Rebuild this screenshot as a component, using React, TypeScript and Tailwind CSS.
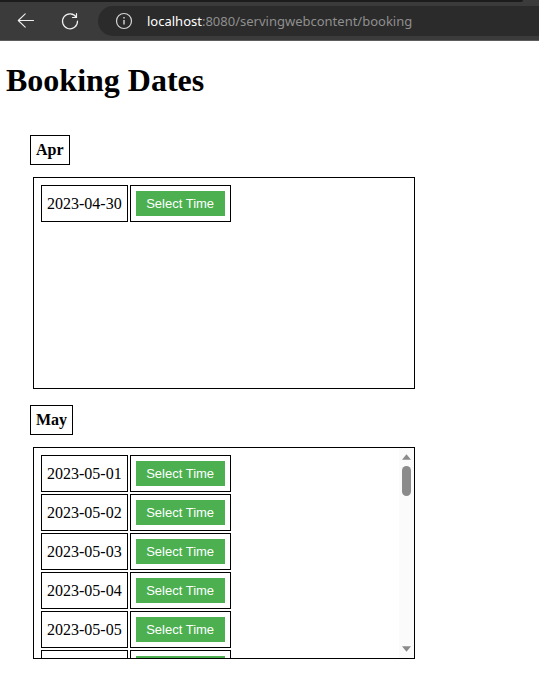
type Month = { name: string; dates: string[] };

const months: Month[] = [
  { name: 'Apr', dates: ['2023-04-30'] },
  {
    name: 'May',
    dates: ['2023-05-01', '2023-05-02', '2023-05-03', '2023-05-04', '2023-05-05', '2023-05-06'],
  },
];

function BrowserBar() {
  return (
    <header className="border-b border-[#5c5c5c] bg-[#3b3b3b]">
      <div className="mr-4 h-0.5 rounded-br-sm bg-[#1c1c1c]" />
      <div className="flex h-[38px] items-center pl-4">
        <button type="button" aria-label="Back" className="mr-6 size-5 text-[#f0f0f0]">
          <svg viewBox="0 0 20 20" className="size-5" fill="none" stroke="currentColor" strokeWidth="1.1" strokeLinecap="round" strokeLinejoin="round">
            <path d="M17.5 9.5H2.5M9.2 2.8L2.3 9.5l6.9 6.7" />
          </svg>
        </button>
        <button type="button" aria-label="Refresh" className="mr-[18px] size-5 text-[#f0f0f0]">
          <svg viewBox="0 0 20 20" className="size-5" fill="none" stroke="currentColor" strokeWidth="1.2" strokeLinecap="round" strokeLinejoin="round">
            <path d="M16.4 6.4A7.5 7.5 0 1 0 17.5 10M16.5 2.5v4h-4" />
          </svg>
        </button>
        <div className="flex h-[30px] flex-1 items-center rounded-l-full bg-[#2b2b2b] pl-4">
          <svg viewBox="0 0 20 20" className="mr-[13px] size-5 text-[#d6d6d6]" fill="none" stroke="currentColor" strokeWidth="1.2">
            <circle cx="10" cy="10" r="7.5" />
            <path d="M10 9v4.5M10 6v1.5" strokeWidth="1.4" />
          </svg>
          <p className="font-['Noto_Sans',sans-serif] text-[13px] leading-5 text-[#8f8f8f]">
            <span className="text-white">localhost</span>:8080/servingwebcontent/booking
          </p>
        </div>
      </div>
    </header>
  );
}

function ScrollBar() {
  return (
    <div className="flex w-[15px] flex-col items-center bg-[#fbfbfb] py-1.5 text-[#8b8b8b]">
      <svg viewBox="0 0 9 6" className="h-1.5 w-[9px]" fill="currentColor">
        <path d="M4.5 0.3L9 5.7H0z" />
      </svg>
      <div className="mt-1.5 h-[30px] w-[9px] rounded-full bg-[#8b8b8b]" />
      <svg viewBox="0 0 9 6" className="mt-auto h-1.5 w-[9px]" fill="currentColor">
        <path d="M0 0.3h9L4.5 5.7z" />
      </svg>
    </div>
  );
}

function MonthSection({ name, dates }: Month) {
  return (
    <section className="mb-4">
      <h2 className="mb-3 w-fit border border-black p-[5px] text-base leading-[18px] font-bold">{name}</h2>
      <div className="ml-[3px] flex h-[212px] max-w-[382px] border border-black">
        <div className="flex-1 overflow-y-auto p-[5px] [scrollbar-width:none]">
          <table className="border-separate border-spacing-[2px]">
            <tbody>
              {dates.map((date) => (
                <tr key={date}>
                  <td className="border border-black p-[5px] text-base leading-[18px]">{date}</td>
                  <td className="border border-black p-[5px]">
                    <button
                      type="button"
                      className="block w-[89px] bg-[#4caf50] py-[5px] font-['Liberation_Sans',Arial,sans-serif] text-[13px] leading-[15px] text-white"
                    >
                      Select Time
                    </button>
                  </td>
                </tr>
              ))}
            </tbody>
          </table>
        </div>
        {dates.length > 5 && <ScrollBar />}
      </div>
    </section>
  );
}

export default function App() {
  return (
    <div className="bg-white font-['Liberation_Serif','Times_New_Roman',serif] text-black">
      <BrowserBar />
      <main className="px-1.5 pt-[21px]">
        <h1 className="text-[32px] leading-[37px] font-bold">Booking Dates</h1>
        <div className="mt-9 ml-6">
          {months.map((month) => (
            <MonthSection key={month.name} {...month} />
          ))}
        </div>
      </main>
    </div>
  );
}
